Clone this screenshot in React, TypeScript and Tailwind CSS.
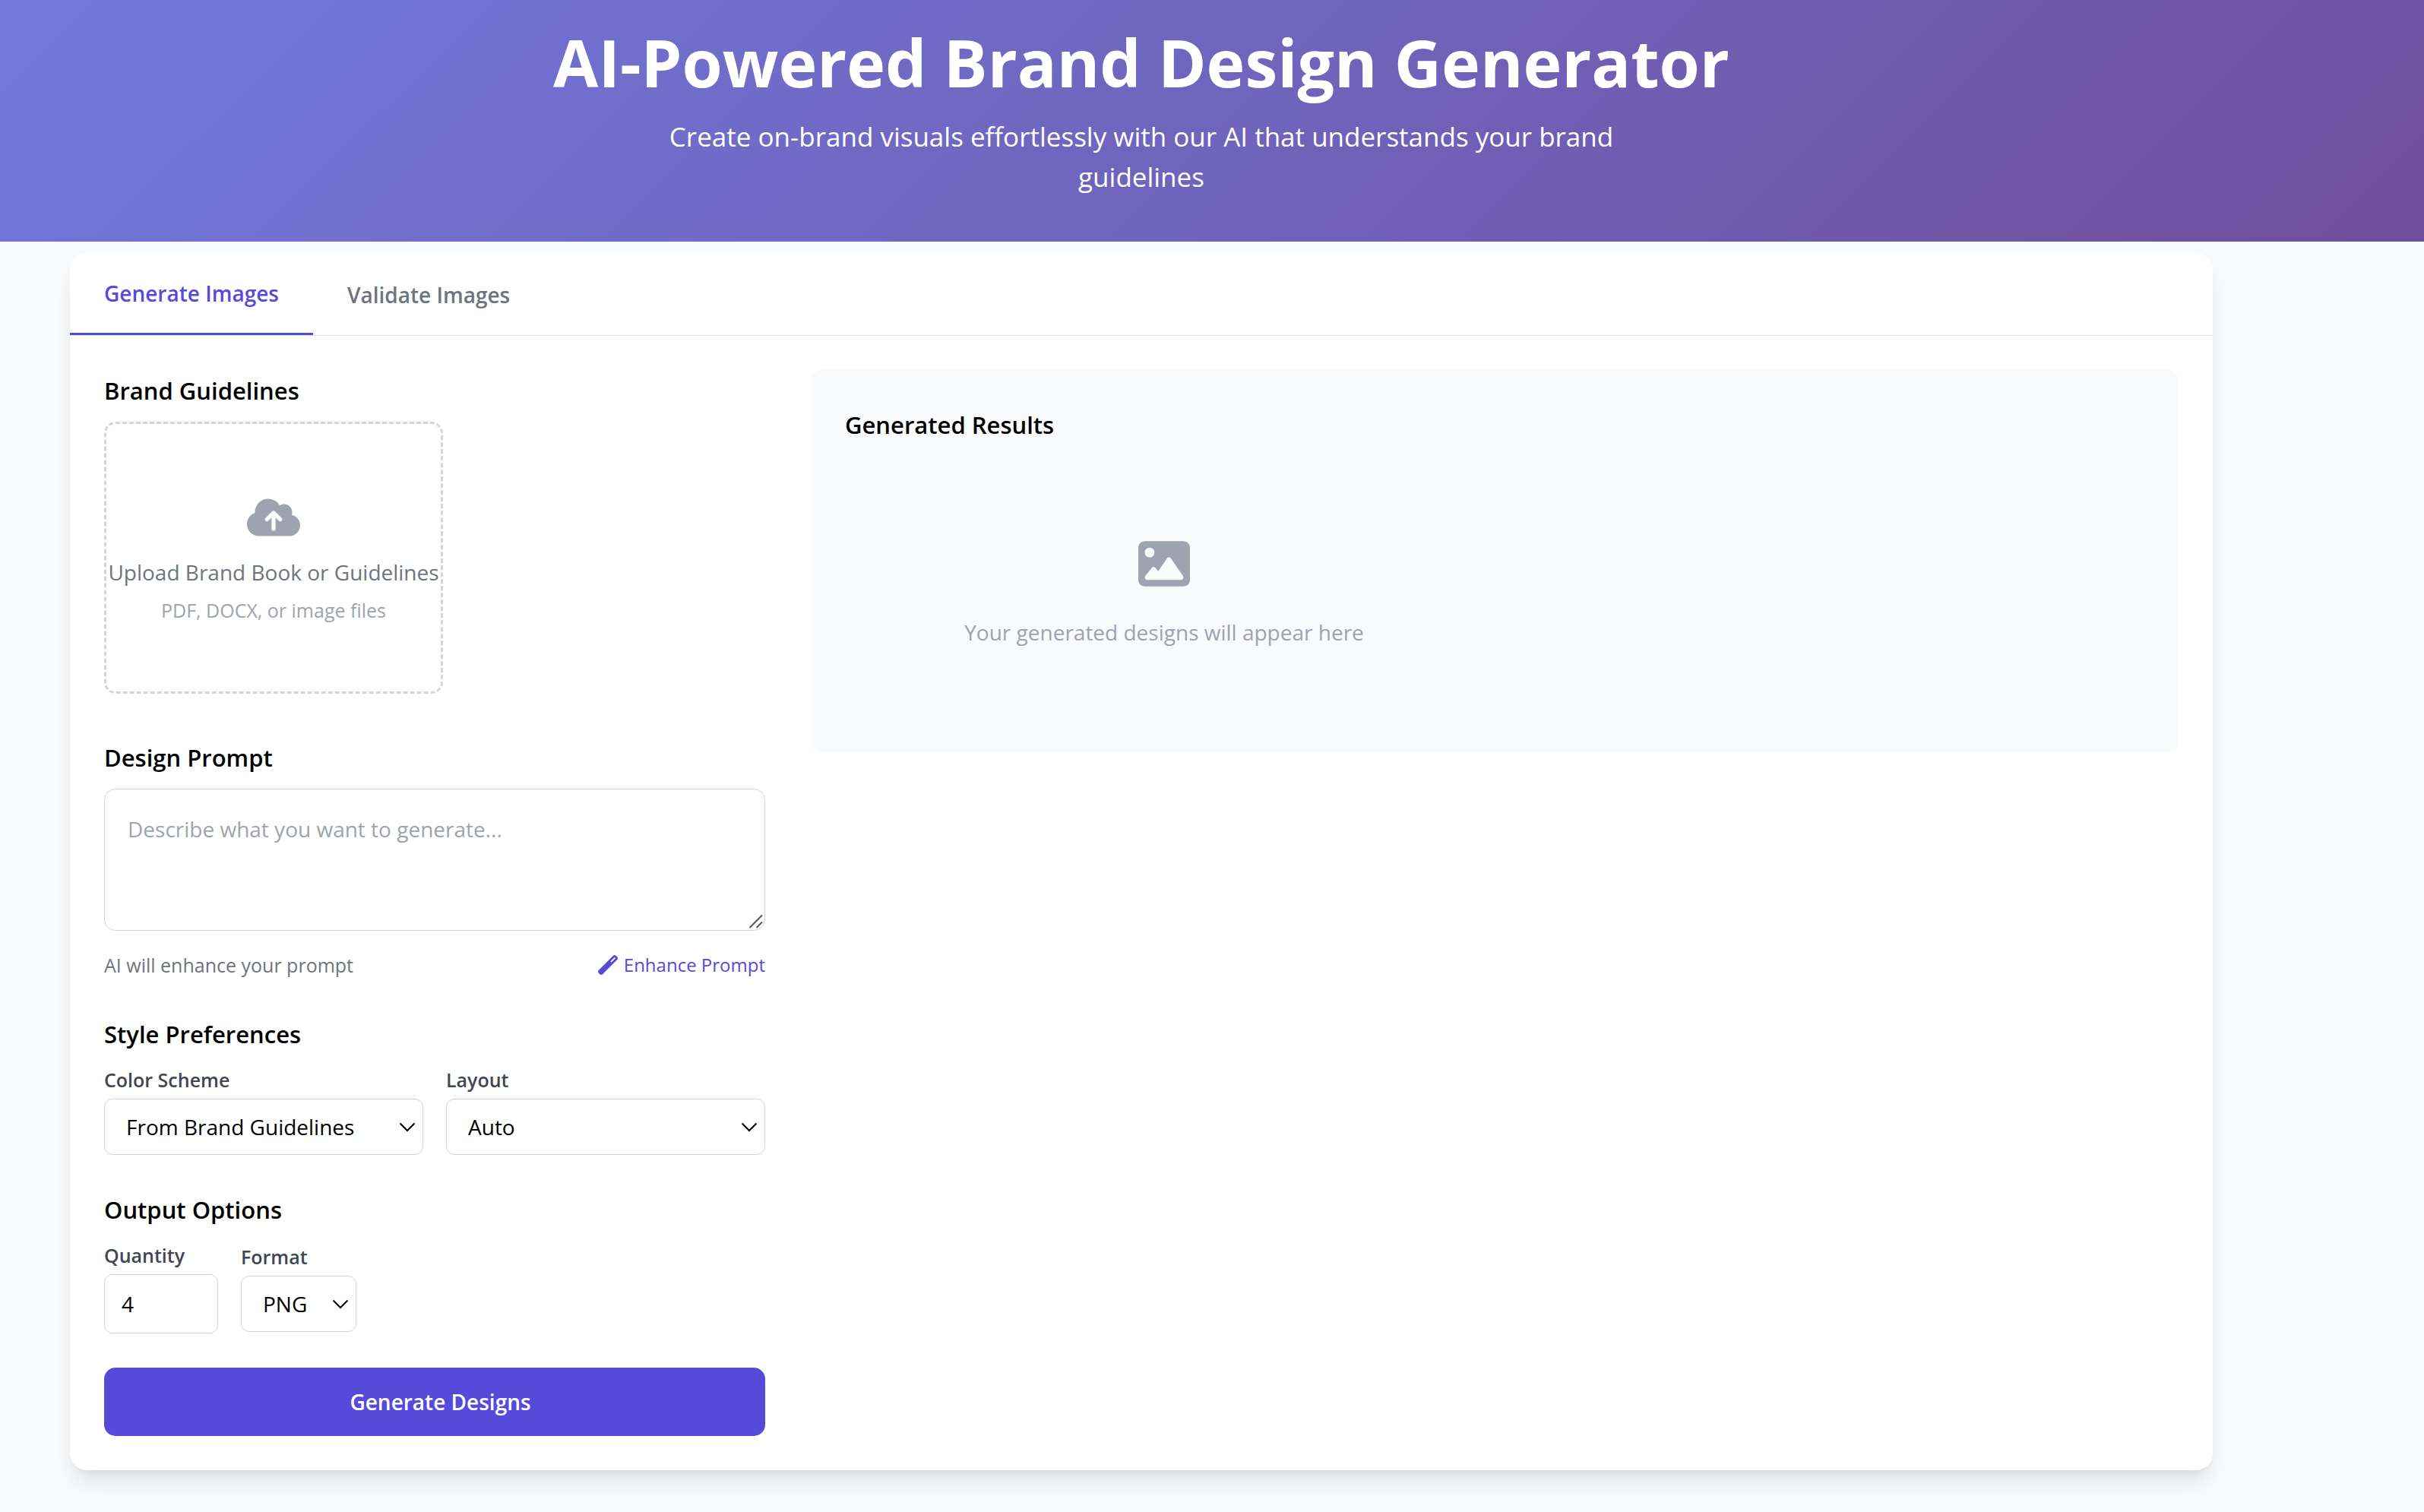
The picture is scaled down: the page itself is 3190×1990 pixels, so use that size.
import React, { useState } from 'react';
import { FaCloudArrowUp, FaImage, FaWandMagic } from 'react-icons/fa6';

function SectionHeading({ children }: { children: React.ReactNode }) {
  return <h2 className="mb-[14px] text-[31px] leading-[54px] font-semibold text-black">{children}</h2>;
}

function FieldLabel({ htmlFor, children }: { htmlFor: string; children: React.ReactNode }) {
  return (
    <label htmlFor={htmlFor} className="mb-[6px] block text-[25px] leading-[38px] font-semibold text-[#3f4654]">
      {children}
    </label>
  );
}

function SelectField({ id, label, options }: { id: string; label: string; options: string[] }) {
  return (
    <div>
      <FieldLabel htmlFor={id}>{label}</FieldLabel>
      <div className="relative">
        <select
          id={id}
          className="h-[74px] w-full appearance-none rounded-[11px] border border-[#d3d5db] bg-white pr-[56px] pl-[28px] text-[28px] text-black"
        >
          {options.map((o) => (
            <option key={o}>{o}</option>
          ))}
        </select>
        <svg
          className="pointer-events-none absolute top-[30px] right-[9px] h-3.5 w-6"
          viewBox="0 0 24 14"
          fill="none"
          stroke="black"
          strokeWidth="2"
          aria-hidden="true"
        >
          <path d="M2.500 2.500 12 12l9.500-9.500" />
        </svg>
      </div>
    </div>
  );
}

export default function App() {
  const [tab, setTab] = useState(0);
  const [quantity, setQuantity] = useState('4');
  const [prompt, setPrompt] = useState('');

  return (
    <div className="min-h-screen bg-[#f9fafc] font-['Open_Sans','Noto_Sans',sans-serif]">
      <header className="bg-[linear-gradient(135deg,#7179dd_0%,#6f4f9c_100%)] pt-[37px] pr-[186px] pb-[59px] text-center text-white">
        <h1 className="text-[86px] leading-[90px] font-bold">AI-Powered Brand Design Generator</h1>
        <p className="mx-auto mt-[26px] max-w-[1260px] text-[35px] leading-[53px]">
          Create on-brand visuals effortlessly with our AI that understands your brand guidelines
        </p>
      </header>

      <main className="pt-[15px] pr-[278px] pb-[55px] pl-[92px]">
        <div className="overflow-hidden rounded-[22px] bg-white shadow-[0_19px_28px_-6px_rgba(0,0,0,0.1),0_8px_11px_-8px_rgba(0,0,0,0.1)]">
          <div className="flex border-b border-[#e5e7eb]" role="tablist">
            {['Generate Images', 'Validate Images'].map((name, i) => (
              <button
                key={name}
                type="button"
                role="tab"
                aria-selected={tab === i}
                onClick={() => setTab(i)}
                className={
                  tab === i
                    ? 'border-b-[3px] border-[#564adb] px-[45px] pt-[31px] pb-[29px] text-[28px] leading-[45px] font-semibold text-[#564adb]'
                    : 'px-[45px] pt-[31px] pb-[29px] text-[28px] leading-[45px] font-semibold text-[#6d7480]'
                }
              >
                {name}
              </button>
            ))}
          </div>

          <div className="grid grid-cols-3 items-start gap-[60px] p-[45px]">
            <form className="flex flex-col" onSubmit={(e) => e.preventDefault()}>
              <section>
                <SectionHeading>Brand Guidelines</SectionHeading>
                <label className="flex w-[446px] cursor-pointer flex-col items-center rounded-[15px] border-[3px] border-dashed border-[#d2d5da] pt-[95px] pb-[88px] whitespace-nowrap">
                  <FaCloudArrowUp className="h-[56px] w-[70px] text-[#9ea3af]" />
                  <span className="mt-[22px] text-[28px] leading-[45px] text-[#6d7480]">
                    Upload Brand Book or Guidelines
                  </span>
                  <span className="mt-[8px] text-[25px] leading-[38px] text-[#9ea3af]">PDF, DOCX, or image files</span>
                  <input type="file" className="sr-only" />
                </label>
              </section>

              <section className="mt-[57px]">
                <SectionHeading>
                  <label htmlFor="prompt">Design Prompt</label>
                </SectionHeading>
                <div className="relative">
                  <textarea
                    id="prompt"
                    value={prompt}
                    onChange={(e) => setPrompt(e.target.value)}
                    placeholder="Describe what you want to generate..."
                    className="block h-[187px] w-full resize-none rounded-[15px] border border-[#d3d5db] bg-white px-[30px] pt-[30px] text-[28px] leading-[45px] text-black placeholder:text-[#9ea3af]"
                  />
                  <svg
                    className="pointer-events-none absolute right-[2px] bottom-[2px] size-5"
                    viewBox="0 0 20 20"
                    stroke="#555"
                    strokeWidth="2"
                    aria-hidden="true"
                  >
                    <path d="M1.500 18 18 1.500M10.500 18 18 10.500" />
                  </svg>
                </div>
                <div className="mt-[26px] flex items-center justify-between text-[25px] leading-[38px]">
                  <span className="text-[#6d7480]">AI will enhance your prompt</span>
                  <button type="button" className="flex items-center gap-[8px] text-[24px] text-[#564adb]">
                    <FaWandMagic className="size-[26px]" />
                    Enhance Prompt
                  </button>
                </div>
              </section>

              <section className="mt-[45px]">
                <SectionHeading>Style Preferences</SectionHeading>
                <div className="grid grid-cols-2 gap-[30px]">
                  <SelectField
                    id="color-scheme"
                    label="Color Scheme"
                    options={['From Brand Guidelines', 'Monochrome', 'Vibrant', 'Pastel']}
                  />
                  <SelectField id="layout" label="Layout" options={['Auto', 'Portrait', 'Landscape', 'Square']} />
                </div>
              </section>

              <section className="mt-[45px]">
                <SectionHeading>Output Options</SectionHeading>
                <div className="flex items-center gap-[30px]">
                  <div className="w-[150px]">
                    <FieldLabel htmlFor="quantity">Quantity</FieldLabel>
                    <input
                      id="quantity"
                      type="number"
                      min={1}
                      max={10}
                      value={quantity}
                      onChange={(e) => setQuantity(e.target.value)}
                      className="block h-[78px] w-full rounded-[11px] border border-[#d3d5db] bg-white px-[22px] text-[28px] text-black"
                    />
                  </div>
                  <div className="w-[152px]">
                    <SelectField id="format" label="Format" options={['PNG', 'JPG', 'SVG']} />
                  </div>
                </div>
              </section>

              <button
                type="submit"
                className="mt-[45px] h-[90px] w-full rounded-[15px] bg-[#564adb] pl-[15px] text-[28px] font-semibold text-white"
              >
                Generate Designs
              </button>
            </form>

            <section className="col-span-2 rounded-[15px] bg-[#f9fafc] p-[45px]">
              <SectionHeading>Generated Results</SectionHeading>
              <div className="mt-[32px] grid grid-cols-2 gap-[30px]">
                <div className="flex flex-col items-center py-[90px] text-[#9ea3af]">
                  <FaImage className="size-[68px]" />
                  <p className="mt-[34px] text-[28px] leading-[45px]">Your generated designs will appear here</p>
                </div>
              </div>
            </section>
          </div>
        </div>
      </main>
    </div>
  );
}
